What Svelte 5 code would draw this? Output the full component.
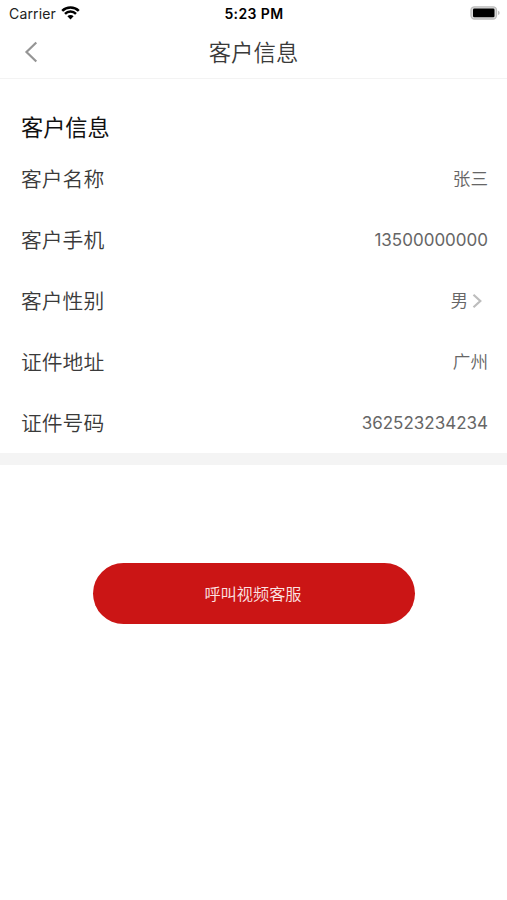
<script lang="ts">
	const rows = [
		{ label: '客户名称', value: '张三' },
		{ label: '客户手机', value: '13500000000', numeric: true },
		{ label: '客户性别', value: '男', link: true },
		{ label: '证件地址', value: '广州' },
		{ label: '证件号码', value: '362523234234', numeric: true }
	];
</script>

<div class="screen">
	<div class="status">
		<div class="carrier">
			<span>Carrier</span>
			<svg width="19" height="14" viewBox="0 0 19 14">
				<path d="M1.2 4.8a11.8 11.8 0 0 1 16.6 0M4 7.8a7.8 7.8 0 0 1 11 0" fill="none" stroke="#000" stroke-width="2.5" />
				<path d="M9.5 13.4 6.4 10.3a4.4 4.4 0 0 1 6.2 0z" />
			</svg>
		</div>
		<span class="time">5:23 PM</span>
		<svg class="battery" width="31" height="14" viewBox="0 0 31 14">
			<rect x="1" y=".8" width="25.5" height="12.2" rx="3.5" fill="#ddd" stroke="#bdbdbd" stroke-width="1.3" />
			<rect x="3" y="2.5" width="21.5" height="8.8" rx="1.3" />
			<path d="M28 4.8v4.2q1.7-.5 1.7-2.1t-1.7-2.1z" fill="#bdbdbd" />
		</svg>
	</div>

	<header>
		<button class="back" aria-label="返回">
			<svg width="14" height="22" viewBox="0 0 14 22"><path d="M12.3 1.5 2.5 11l9.8 9.5" fill="none" stroke="#959595" stroke-width="2.2" /></svg>
		</button>
		<h1>客户信息</h1>
	</header>

	<main>
		<h2>客户信息</h2>
		{#each rows as row}
			<div class="row">
				<span class="label">{row.label}</span>
				<span class="value" class:numeric={row.numeric}>{row.value}</span>
				{#if row.link}
					<svg class="arrow" width="10" height="16" viewBox="0 0 10 16"><path d="m1.5 1.8 6.8 6.2-6.8 6.2" fill="none" stroke="#bdbdbd" stroke-width="2.2" /></svg>
				{/if}
			</div>
		{/each}
	</main>

	<button class="call">呼叫视频客服</button>
</div>

<style>
	:global(body) { background: #fff; }
	.screen { width: 507px; height: 900px; overflow: hidden; font-family: Inter, "Noto Sans CJK SC", sans-serif; background: #fff; }
	.status { display: grid; grid-template-columns: 1fr auto 1fr; align-items: center; height: 27px; padding: 0 6px 0 9px; box-sizing: border-box; font-size: 14px; color: #000; }
	.carrier { display: flex; align-items: center; gap: 5px; letter-spacing: .15px; color: #222; }
	.carrier svg { margin-bottom: 2px; }
	.time { margin-right: 2px; font-weight: 600; letter-spacing: .4px; }
	.battery { justify-self: end; margin-bottom: 1px; }
	header { display: grid; grid-template-columns: 60px 1fr 60px; align-items: center; height: 52px; box-sizing: border-box; border-bottom: 1px solid #f3f3f3; }
	button { border: 0; padding: 0; font-family: inherit; cursor: pointer; }
	.back { display: flex; justify-content: flex-start; margin-bottom: 2px; padding-left: 24px; background: none; }
	h1 { margin: 0; text-align: center; font-size: 22.4px; line-height: 30px; font-weight: 350; color: #3a3a3a; }
	main { padding: 34px 19px 0 21px; border-bottom: 12px solid #f4f4f4; }
	h2 { margin: 0; font-size: 22.2px; line-height: 30px; font-weight: 400; color: #111; }
	.row { display: flex; align-items: center; height: 61px; }
	.row:nth-of-type(1) { margin-top: 5px; }
	.label { flex: 1; margin-bottom: 1px; font-size: 20.8px; font-weight: 350; color: #3a3a3a; }
	.value { margin-bottom: 2px; font-size: 17.6px; font-weight: 350; color: #666; }
	.numeric { margin-bottom: 0; font-size: 17px; font-weight: 400; }
	.arrow { margin: 0 6px 0 4px; }
	.call { display: block; width: 322px; height: 61px; margin: 98px 0 0 93px; padding: 0 2px 2px 0; border-radius: 31px; background: #cb1515; color: #fbe4e4; font-size: 16.2px; font-weight: 350; }
</style>
